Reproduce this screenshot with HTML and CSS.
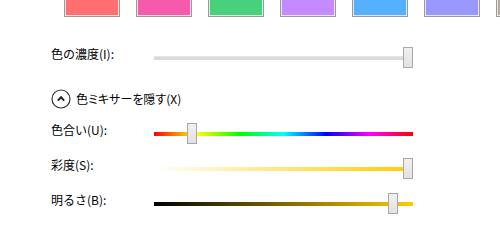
FILE: index.html
```html
<!DOCTYPE html>
<html lang="ja">
<head>
<meta charset="utf-8">
<link rel="stylesheet" href="styles.css">
</head>
<body>
<div class="swatches">
  <div class="swatch s1"></div>
  <div class="swatch s2"></div>
  <div class="swatch s3"></div>
  <div class="swatch s4"></div>
  <div class="swatch s5"></div>
  <div class="swatch s6"></div>
  <div class="swatch s7"></div>
</div>
<div class="panel">
  <div class="row first">
    <span class="label">色の濃度(I):</span>
    <div class="slider"><div class="track gray"></div><div class="thumb" style="left:249px"></div></div>
  </div>
  <div class="toggle">
    <svg class="circle" width="20" height="20" viewBox="0 0 20 20"><circle cx="10" cy="10" r="9" fill="none" stroke="#333" stroke-width="1.2"/><path d="M6.8 11.6 L10 8.3 L13.2 11.6" fill="none" stroke="#222" stroke-width="2"/></svg>
    <span class="toggle-text">色ミキサーを隠す(X)</span>
  </div>
  <div class="row">
    <span class="label">色合い(U):</span>
    <div class="slider"><div class="track hue"></div><div class="thumb" style="left:33px"></div></div>
  </div>
  <div class="row">
    <span class="label">彩度(S):</span>
    <div class="slider"><div class="track sat"></div><div class="thumb" style="left:249px"></div></div>
  </div>
  <div class="row">
    <span class="label">明るさ(B):</span>
    <div class="slider"><div class="track bri"></div><div class="thumb" style="left:234px"></div></div>
  </div>
</div>
</body>
</html>
```
FILE: styles.css
```css
html, body {
  margin: 0;
  padding: 0;
  background: #fff;
  width: 500px;
  height: 250px;
  overflow: hidden;
  font-family: "Noto Sans CJK JP", "Noto Sans", sans-serif;
  font-size: 12px;
  color: #000;
}
.swatches {
  display: flex;
  gap: 16px;
  padding-left: 64px;
  height: 17px;
  width: 436px;
  overflow: hidden;
}
.swatch {
  flex: 0 0 auto;
  width: 54px;
  height: 16px;
  border: 1px solid #9a9a9a;
  border-top: none;
  box-shadow: inset 1px 0 0 rgba(255,255,255,0.75), inset -1px 0 0 rgba(255,255,255,0.75), inset 0 -1px 0 rgba(255,255,255,0.75);
}
.s1 { background: #ff6f6f; }
.s2 { background: #f55aac; }
.s3 { background: #46d17a; }
.s4 { background: #c48aff; }
.s5 { background: #55b0ff; }
.s6 { background: #9898ff; }
.s7 { background: #b9a99a; }
.panel {
  padding-left: 51px;
  margin-top: 30px;
}
.row {
  display: grid;
  grid-template-columns: 103px 259px;
  height: 21px;
  margin-bottom: 14px;
}
.row.first { margin-bottom: 21px; }
.label {
  align-self: start;
  line-height: 16px;
  margin-top: -1px;
  white-space: nowrap;
}
.slider {
  position: relative;
  height: 21px;
}
.track {
  position: absolute;
  left: 0;
  right: 0;
  top: 9px;
  height: 4px;
}
.track.gray {
  top: 9px;
  height: 3px;
  background: #dadada;
  border-top: 1px solid #e4e4e4;
}
.track.hue {
  background: linear-gradient(to right, #f00, #ff0 16.67%, #0f0 33.33%, #0ff 50%, #00f 66.67%, #f0f 83.33%, #f00);
}
.track.sat {
  background: linear-gradient(to right, #fff, #ffcc00);
}
.track.bri {
  background: linear-gradient(to right, #000, #ffcc00);
}
.thumb {
  position: absolute;
  top: 0;
  width: 8px;
  height: 19px;
  border: 1px solid #a8a8a8;
  background: linear-gradient(to bottom, #f0f0f0, #e2e2e2);
}
.toggle {
  display: flex;
  align-items: center;
  height: 20px;
  margin-bottom: 14px;
}
.circle {
  display: block;
  flex: 0 0 auto;
}
.toggle-text {
  margin-left: 5px;
  line-height: 16px;
  margin-top: -1px;
  font-feature-settings: "palt";
}
```
